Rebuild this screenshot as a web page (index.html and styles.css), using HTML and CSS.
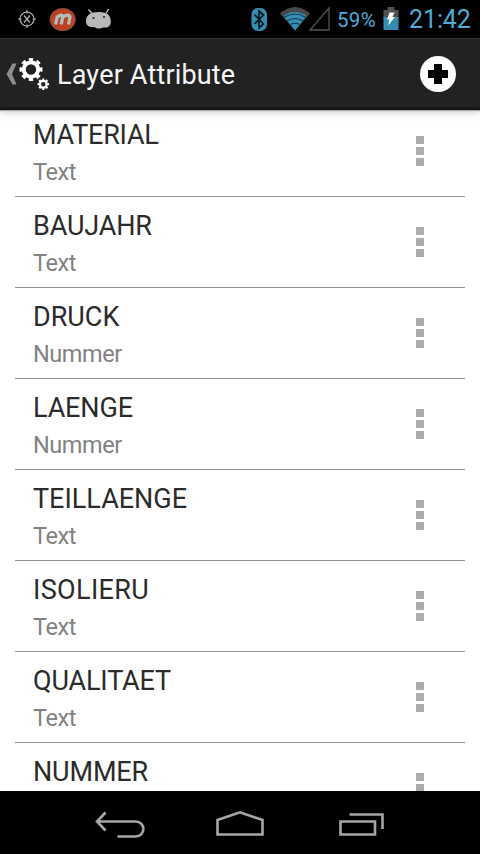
FILE: index.html
```html
<!DOCTYPE html>
<html lang="de">
<head>
<meta charset="utf-8">
<title>Layer Attribute</title>
<link rel="stylesheet" href="styles.css">
</head>
<body>
<div class="screen">
  <div class="status">
    <svg class="status-left" width="130" height="38" viewBox="0 0 130 38">
      <g fill="none" stroke="#b5b5b5" stroke-width="1.2">
        <circle cx="27" cy="19" r="7"/>
        <path d="M27 10v3.500M27 24.500v3.500M18 19h3.500M32.500 19h3.500M24 15.500l6 7M30 15.500l-6 7"/>
      </g>
      <ellipse cx="62.700" cy="19.500" rx="13" ry="11.500" fill="#8f4c3a"/>
      <ellipse cx="62.700" cy="19.500" rx="11.800" ry="10.300" fill="#c04022"/>
      <path d="M55.500 24.500l2-9M57 17.500q5-4.500 5.700-.500l-1.500 7.500M62.500 17.500q6-4.500 7.500-.500l-1.500 7.500" fill="none" stroke="#aebfc0" stroke-width="3.300"/>
      <path d="M88.500 9.500l3.500 4M108.500 9l-2.500 4.500" stroke="#b9b9b9" stroke-width="1.500"/>
      <path d="M86 21c0-6 5-9 12-9 8 0 12 2 12.700 8 .700 6-2.700 8-6.700 7.500-2-.200-3 1.500-6 1-2-.300-2.500-1.500-5-1.500-5 0-7-2-7-6z" fill="#b9b9b9"/>
      <circle cx="93.500" cy="18" r="1.100" fill="#222"/><circle cx="104" cy="17" r="1.100" fill="#222"/>
    </svg>
    <svg class="signals" width="82" height="38" viewBox="250 0 82 38">
      <rect x="251.500" y="8" width="15.500" height="23" rx="6.500" fill="#348db3"/>
      <path d="M254.500 14.500l9 9.500-4.500 4V11l4.500 4-9 9" fill="none" stroke="#06141c" stroke-width="1.700"/>
      <path d="M280 13.500q15-13 30 0L295 30.500z" fill="#484848"/>
      <path d="M283.500 16q11.500-8 23 0L295 30.500z" fill="#348db3"/>
      <path d="M284 17.500q11-7 22 0M287 21q8-5 16 0M290.500 24.500q4.500-2.500 9 0" fill="none" stroke="#103448" stroke-width="1.200"/>
      <path d="M329 8v22h-19z" fill="none" stroke="#555" stroke-width="1.300"/>
    </svg>
    <span class="percent">59%</span>
    <svg class="battery" width="16" height="38" viewBox="383 0 16 38">
      <path d="M383.500 10h4V7h7v3h4v9h-15z" fill="#505050"/>
      <path d="M383.500 17h15v13h-15z" fill="#348db3"/>
      <path d="M389.500 12.500h5l-2 4.500h2.500l-7 8.500 1.500-6h-2.500z" fill="#fff"/>
    </svg>
    <span class="clock">21:42</span>
  </div>
  <header class="bar">
    <svg class="up" width="50" height="72" viewBox="0 38 50 72">
      <path d="M12.500 63.500h4l-4.500 10.500 4.500 10.500h-4l-6-10.500z" fill="#8e8e8e"/>
      <g fill="none" stroke="#fff">
        <circle cx="31" cy="69.500" r="7.200" stroke-width="4"/>
        <circle cx="31" cy="69.500" r="9.600" stroke-width="3.800" pathLength="16" stroke-dasharray="1.100 .9" stroke-dashoffset=".55"/>
        <circle cx="43.300" cy="84.200" r="3.400" stroke-width="2.300"/>
        <circle cx="43.300" cy="84.200" r="4.700" stroke-width="2.200" pathLength="16" stroke-dasharray="1.100 .9" stroke-dashoffset=".55"/>
      </g>
    </svg>
    <h1 class="title">Layer Attribute</h1>
    <svg class="add" width="36" height="36" viewBox="0 0 36 36">
      <circle cx="18" cy="18" r="18" fill="#fff"/>
      <path d="M14 8h8v6h6v8h-6v6h-8v-6H8v-8h6z" fill="#000"/>
    </svg>
  </header>
  <main class="list">
    <div class="row"><div><div class="name tight">MATERIAL</div><div class="type">Text</div></div><div class="more"><i></i><i></i><i></i></div></div>
    <div class="row"><div><div class="name">BAUJAHR</div><div class="type">Text</div></div><div class="more"><i></i><i></i><i></i></div></div>
    <div class="row"><div><div class="name even">DRUCK</div><div class="type">Nummer</div></div><div class="more"><i></i><i></i><i></i></div></div>
    <div class="row"><div><div class="name">LAENGE</div><div class="type">Nummer</div></div><div class="more"><i></i><i></i><i></i></div></div>
    <div class="row"><div><div class="name even">TEILLAENGE</div><div class="type">Text</div></div><div class="more"><i></i><i></i><i></i></div></div>
    <div class="row"><div><div class="name loose">ISOLIERU</div><div class="type">Text</div></div><div class="more"><i></i><i></i><i></i></div></div>
    <div class="row"><div><div class="name">QUALITAET</div><div class="type">Text</div></div><div class="more"><i></i><i></i><i></i></div></div>
    <div class="row"><div><div class="name">NUMMER</div></div><div class="more"><i></i><i></i><i></i></div></div>
  </main>
  <nav class="nav">
    <svg width="480" height="63" viewBox="0 791 480 63" fill="none" stroke="#a6a6a6" stroke-width="2.600">
      <path d="M97 821.500h38.500c10.500 0 10.500 15 0 15H117.500M105.500 812.500l-8.500 9 8.500 9"/>
      <path d="M217.500 834.500v-14.500l22.500-7.700 22.500 7.700v14.500z"/>
      <path d="M340.500 821.500h34.500v13h-34.500zM349.500 814.500h33v14.500"/>
    </svg>
  </nav>
</div>
</body>
</html>
```
FILE: styles.css
```css
body { margin: 0; background: #000; font-family: Roboto, "Liberation Sans", sans-serif; }
.screen { width: 480px; height: 854px; display: flex; flex-direction: column; overflow: hidden; background: #fff; }
svg { display: block; flex: none; }
.status { height: 38px; flex: none; display: flex; align-items: center; background: #000; color: #4eabd6; position: relative; z-index: 2; }
.signals { margin-left: 120px; }
.percent { width: 46px; margin-left: 5px; font-size: 20.5px; line-height: 38px; padding-top: 1px; letter-spacing: .3px; white-space: nowrap; }
.clock { margin-left: 10px; font-size: 25px; line-height: 38px; padding-top: 1px; letter-spacing: -.1px; }
.bar { height: 72px; flex: none; display: flex; align-items: center; box-sizing: border-box; background: linear-gradient(#303030 0 1px, #222 1px 69px, #151515 70px); box-shadow: 0 1px 1px #aaa, 0 2px 8px #ccc; position: relative; z-index: 1; }
.title { margin: 1px 0 0 7px; width: 200px; font-size: 27px; font-weight: 400; letter-spacing: .17px; line-height: 72px; color: #f5f5f5; white-space: nowrap; }
.add { margin-left: 163px; }
.list { flex: 1; min-height: 0; overflow: hidden; margin-top: -4px; padding: 0 15px; }
.row { height: 91px; box-sizing: border-box; border-bottom: 1px solid #929292; padding: 0 41px 0 18px; display: flex; justify-content: space-between; }
.name { margin-top: 13px; font-size: 27px; line-height: 32px; letter-spacing: -.15px; color: #2b2b2b; }
.tight { letter-spacing: -.25px; }
.even { letter-spacing: 0; }
.loose { letter-spacing: .35px; }
.type { margin-top: 6px; font-size: 23.5px; line-height: 30px; letter-spacing: -.45px; color: #828282; }
.more { display: flex; flex-direction: column; gap: 3px; margin-top: 30px; }
.more i { width: 8px; height: 8px; background: #acacac; }
.nav { height: 63px; flex: none; background: #000; }
```
